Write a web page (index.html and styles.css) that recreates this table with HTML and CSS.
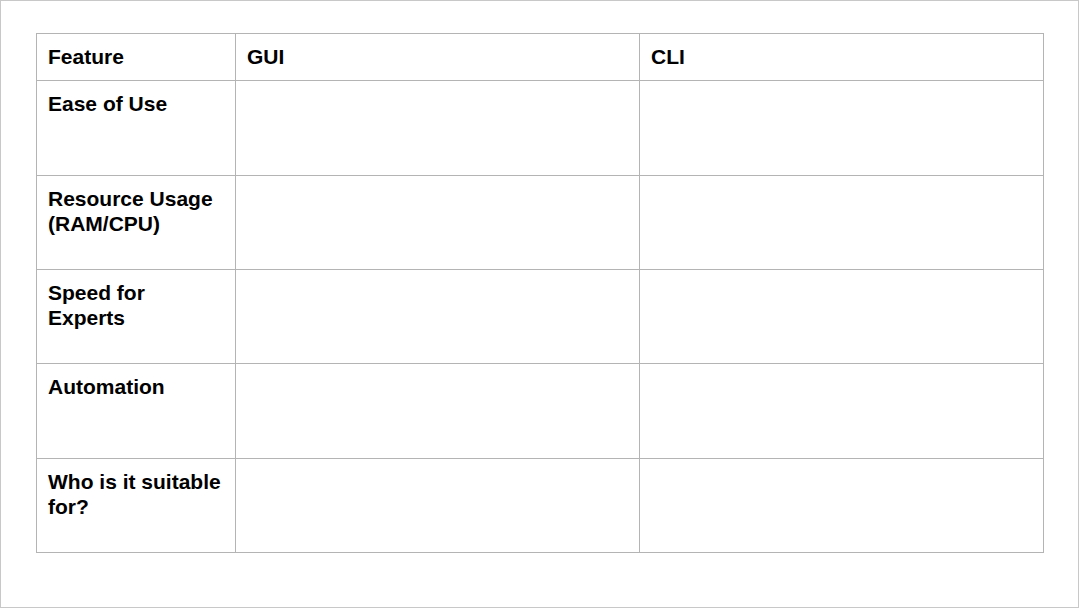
FILE: index.html
```html
<!DOCTYPE html>
<html lang="en">
<head>
    <meta charset="UTF-8">
    <meta name="viewport" content="width=device-width, initial-scale=1.0">
    <title>GUI vs CLI</title>
    <link rel="stylesheet" href="styles.css">
</head>
<body>
    <div class="page">
        <table class="compare">
            <colgroup>
                <col class="col-feature">
                <col class="col-value">
                <col class="col-value">
            </colgroup>
            <tr class="head">
                <td>Feature</td>
                <td>GUI</td>
                <td>CLI</td>
            </tr>
            <tr class="tall">
                <td>Ease of Use</td>
                <td></td>
                <td></td>
            </tr>
            <tr>
                <td>Resource Usage (RAM/CPU)</td>
                <td></td>
                <td></td>
            </tr>
            <tr>
                <td>Speed for Experts</td>
                <td></td>
                <td></td>
            </tr>
            <tr class="tall">
                <td>Automation</td>
                <td></td>
                <td></td>
            </tr>
            <tr>
                <td>Who is it suitable for?</td>
                <td></td>
                <td></td>
            </tr>
        </table>
    </div>
</body>
</html>
```

FILE: styles.css
```css
html, body {
    margin: 0;
    padding: 0;
    background: #fff;
}
.page {
    box-sizing: border-box;
    width: 1079px;
    height: 608px;
    border: 1px solid #c8c8c8;
    padding: 32px 0 0 35px;
    font-family: "Liberation Sans", Arial, sans-serif;
}
.compare {
    border-collapse: collapse;
    table-layout: fixed;
    width: 1008px;
}
.col-feature {
    width: 199px;
}
.col-value {
    width: 404px;
}
.compare td {
    border: 1px solid #b4b4b4;
    vertical-align: top;
    padding: 10px 11px 0 11px;
    font-size: 21px;
    font-weight: bold;
    line-height: 25px;
    color: #000;
    height: 94px;
    box-sizing: border-box;
}
.compare .head td {
    height: 47px;
}
.compare .tall td {
    height: 95px;
}
```
